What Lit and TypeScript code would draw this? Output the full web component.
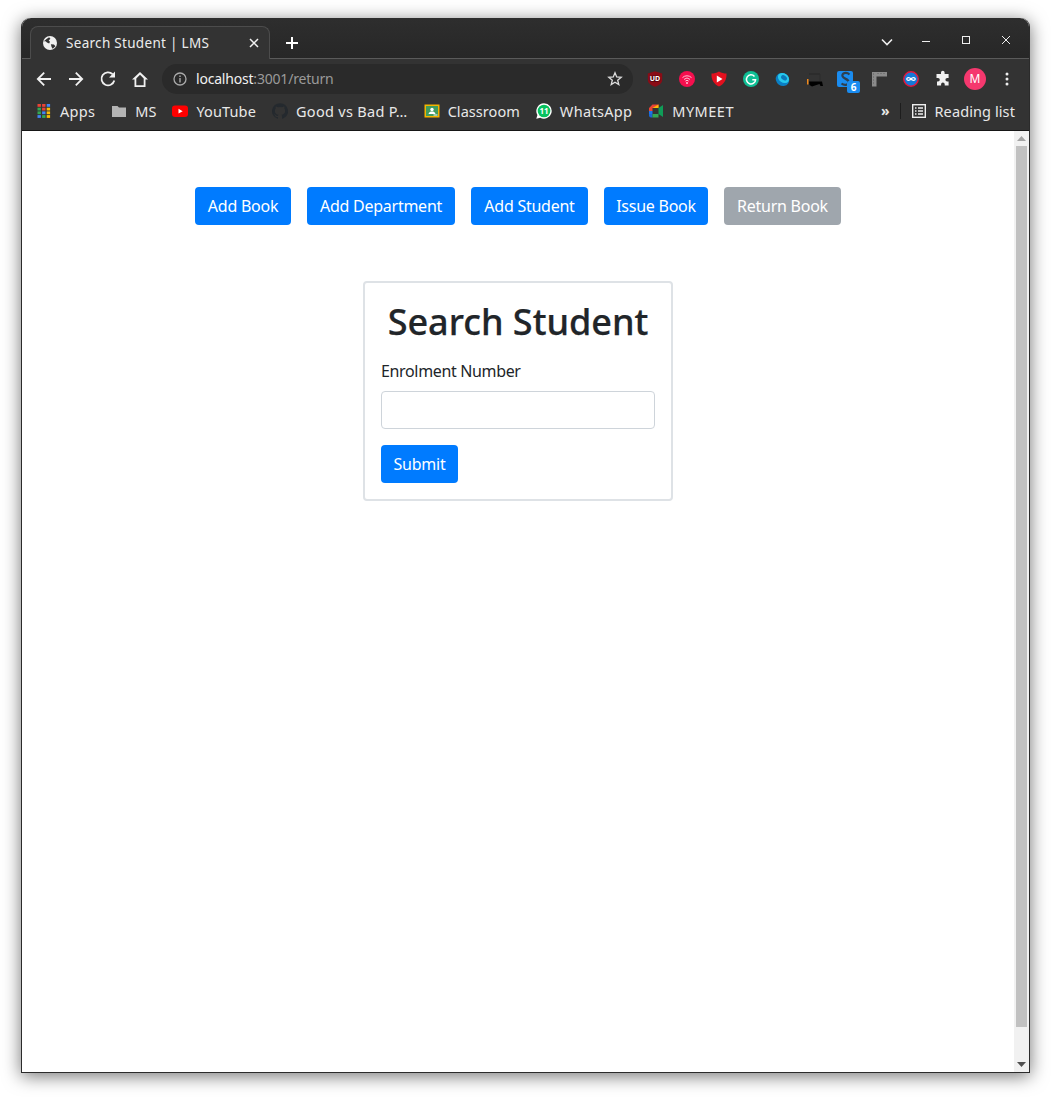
import { LitElement, html, css, svg } from "lit";
import { customElement } from "lit/decorators.js";

const nav = [
  svg`<path d="M17 10H4.500M10.200 3.600 3.800 10 10.200 16.400" fill="none" stroke="#f1f1f1" stroke-width="1.800"/>`,
  svg`<path d="M3 10H15.500M9.800 3.600 16.200 10 9.800 16.400" fill="none" stroke="#f1f1f1" stroke-width="1.800"/>`,
  svg`<path d="M16.300 11.500A6.500 6.500 0 1 1 14.600 5.200" fill="none" stroke="#f1f1f1" stroke-width="1.800"/><path d="M17 2.500V8.500H11Z" fill="#f1f1f1"/>`,
  svg`<path fill-rule="evenodd" d="M10 3 2 10.500H4.500V18H15.500V10.500H18ZM6.300 16.300V9.400L10 5.700 13.700 9.400V16.300Z" fill="#f1f1f1"/>`,
];

const ext = [
  svg`<path d="M.8 2.500 8 .2l7.200 2.300V9c0 3-3 5.400-7.200 6.800C3.800 14.400.8 12 .8 9Z" fill="#8a0c16"/><rect x="2.500" y="4.500" width="11" height="6.500" rx="3.200" fill="#5a0510"/><text x="8" y="10.200" text-anchor="middle" class="tiny">UD</text>`,
  svg`<circle cx="8" cy="8" r="8" fill="#f50f4e"/><path d="M3.500 6.600a6.500 6.500 0 0 1 9 0M5 8.400a4.300 4.300 0 0 1 6 0M6.400 10.100a2.200 2.200 0 0 1 3.200 0" fill="none" stroke="#ffc4d5" stroke-width="1"/><circle cx="8" cy="12" r="1" fill="#ffc4d5"/>`,
  svg`<path d="M.5 2.500C3 2.500 5.500 2 8 .5c2.500 1.500 5 2 7.500 2 .3 6-2 10.500-7.500 13C2.500 13 .2 8.500.5 2.500Z" fill="#e3101e"/><path d="M5.800 4.500 11.500 8l-5.700 3.500Z" fill="#fff"/>`,
  svg`<circle cx="8" cy="8" r="8" fill="#0fbf95"/><path d="M11.500 5.400A4.600 4.600 0 1 0 12.600 8.700H9.300" fill="none" stroke="#fff" stroke-width="1.500"/>`,
  svg`<ellipse cx="7.500" cy="8.500" rx="7" ry="6.300" transform="rotate(35 7.500 8.500)" fill="#0b7fc4"/><ellipse cx="8.500" cy="7" rx="6" ry="4.600" transform="rotate(35 8.500 7)" fill="#27c8ec"/><ellipse cx="9" cy="6.800" rx="3.200" ry="2.200" transform="rotate(35 9 6.800)" fill="#0b78b8"/>`,
  svg`<rect x="2" y="2" width="11" height="2" fill="#2c2c2c"/><path d="M13 3V10" stroke="#2c2c2c"/><path d="M2 10.500H15L16 15H13.500L12.500 13 5 15.500 2.500 14Z" fill="#000"/><path d="M0 8H1.500V13.500H0Z" fill="#f08a1d"/>`,
  svg`<rect x="-2" y="0" width="16" height="16" rx="2" fill="#1a8cf0"/><path d="M10.500 3.500C7.500 .8 2.500 2 3.500 5.200S9.500 7.500 9.500 11 5 14.500 2.500 12.500" fill="none" stroke="#2f3f4f" stroke-width="2.200"/>`,
  svg`<path d="M1 1H16V5.500H5.500V15.500H1Z" fill="#8b8b8b"/><path d="M2 3h1M2 6h1M2 9h1M2 12h1M7 2v1M10 2v1M13 2v1" stroke="#5f5f5f"/>`,
  svg`<circle cx="8" cy="8" r="7.200" fill="#1579d8" stroke="#e4173e" stroke-width="1.400"/><path d="M8 8C6.800 6.400 3.800 6.200 3.800 8S6.800 9.600 8 8C9.200 6.400 12.200 6.200 12.200 8S9.200 9.600 8 8Z" fill="none" stroke="#fff" stroke-width="1.300"/>`,
  svg`<path d="M6 1.500a1.800 1.800 0 0 1 3.600 0V3h4v4h-1.400a1.800 1.800 0 0 0 0 3.600h1.400v4H9.700v-1.300a1.800 1.800 0 0 0-3.600 0v1.300H2v-4.100h1a1.800 1.800 0 0 0 0-3.600H1.500V3H6Z" fill="#f1f1f1"/>`,
];

const appColors = [["#ea4335", "#ea4335", "#4285f4"], ["#34a853", "#ea4335", "#fbbc05"], ["#34a853", "#4285f4", "#fbbc05"], ["#4285f4", "#34a853", "#fbbc05"]];

const marks = [
  { icon: svg`<g>${appColors.flatMap((row, r) => row.map((c, i) => svg`<rect x="${1.5 + i * 4.6}" y="${1 + r * 3.7}" width="3.400" height="2.800" fill="${c}"/>`))}</g>`, text: "Apps", ls: 0.3 },
  { icon: svg`<path d="M1 3h5.500L8 4.600h7V14H1Z" fill="#b4b4b4"/>`, text: "MS", ls: 0 },
  { icon: svg`<rect x="0" y="2.500" width="16" height="11.500" rx="3" fill="#f00"/><path d="M6.500 5.800 10.700 8.200 6.500 10.600Z" fill="#fff"/>`, text: "YouTube", ls: 0.14 },
  { icon: svg`<path d="M8 .2a8 8 0 0 0-2.500 15.600c.4.100.5-.2.5-.4v-1.400c-2.200.5-2.700-1-2.700-1-.4-.9-.9-1.200-.9-1.200-.7-.5.100-.5.100-.5.800.100 1.200.8 1.200.8.700 1.200 1.900.9 2.300.7.100-.5.300-.9.500-1.100-1.800-.2-3.600-.9-3.600-4 0-.9.300-1.600.8-2.100-.1-.2-.4-1 .1-2.100 0 0 .7-.2 2.200.8a7.600 7.600 0 0 1 4 0c1.500-1 2.200-.8 2.200-.8.500 1.100.2 1.900.1 2.100.5.500.8 1.200.8 2.100 0 3.100-1.900 3.800-3.700 4 .3.300.6.800.6 1.500v2.200c0 .2.100.5.600.4A8 8 0 0 0 8 .2Z" fill="#24292e"/>`, text: "Good vs Bad P…", ls: 0.3 },
  { icon: svg`<rect x=".5" y="1.500" width="15" height="13" fill="#f4b400"/><rect x="2" y="3" width="12" height="10" fill="#3f9b5e"/><circle cx="8" cy="6.500" r="1.700" fill="#fff"/><path d="M4.500 11c.5-2 2-2.500 3.500-2.500s3 .5 3.500 2.500Z" fill="#fff"/><rect x="9.500" y="11.500" width="4" height="1" fill="#fff"/>`, text: "Classroom", ls: 0.05 },
  { icon: svg`<path d="M8 .3a7.700 7.700 0 0 0-6.600 11.600L.3 15.700l3.900-1A7.700 7.700 0 1 0 8 .3Z" fill="#fff"/><circle cx="8" cy="8" r="6.300" fill="#08c25f"/><text x="8" y="10.800" text-anchor="middle" class="num">11</text>`, text: "WhatsApp", ls: 0.32 },
  { icon: svg`<path d="M1 5 4.500 1.500H10.500V5H4.500V8H1Z" fill="#ea4335"/><path d="M1 8H4.500V11H1Z" fill="#1a73e8"/><path d="M1 11H4.500V14.500H3Q1 14.500 1 12.500Z" fill="#1967d2"/><path d="M4.500 11H10.500V14.500H4.500Z" fill="#34a853"/><path d="M10.500 1.500V5H4.500" fill="#fbbc04"/><path d="M10.500 5V11L15 14V2Z" fill="#0f9d58"/>`, text: "MYMEET", ls: 0.5 },
];

const buttons = [
  { text: "Add Book", w: 96, off: false },
  { text: "Add Department", w: 148, off: false },
  { text: "Add Student", w: 117, off: false },
  { text: "Issue Book", w: 104, off: false },
  { text: "Return Book", w: 117, off: true },
];

@customElement("app-root")
export class AppRoot extends LitElement {
  static styles = css`
    :host { display: block; height: 1097px; overflow: hidden; background: #fff; font-family: "Noto Sans", sans-serif; }
    * { box-sizing: border-box; }
    .stage { padding: 18px 21px 0; }
    .window { height: 1055px; border: 1px solid #2b2b2b; border-top: 0; border-radius: 9px 9px 0 0; box-shadow: 0 3px 18px rgba(0,0,0,.55); display: flex; flex-direction: column; background: #fff; }
    .titlebar { height: 41px; flex: none; display: flex; align-items: flex-end; padding-left: 8px; border-radius: 9px 9px 0 0; background: linear-gradient(#2e2e2e, #272727); border-bottom: 1px solid #5a5a5a; position: relative; }
    .tab { width: 240px; height: 33px; margin-bottom: -1px; position: relative; z-index: 1; background: #333; border: 1px solid #4c4c4c; border-bottom: 0; border-radius: 8px 8px 0 0; display: flex; align-items: center; padding: 0 10px 0 12px; color: #ececec; font-size: 13.5px; letter-spacing: .3px; }
    .tab .fav { margin-right: 9px; flex: none; }
    .tab span { flex: 1; white-space: nowrap; }
    .newtab { width: 28px; height: 28px; margin: 0 0 1px 8px; display: flex; align-items: center; justify-content: center; }
    .controls { margin-left: auto; height: 40px; display: flex; align-items: center; padding: 4px 3px 0 0; }
    .controls div { width: 40px; height: 40px; display: flex; align-items: center; justify-content: center; }
    .chev { margin: 4px 0 0 2px; }
    .toolbar { height: 39px; flex: none; background: #333; display: flex; align-items: center; padding-left: 6px; }
    .btn32 { width: 32px; height: 32px; flex: none; display: flex; align-items: center; justify-content: center; position: relative; }
    .omni { width: 471px; height: 30px; margin: 0 6px; flex: none; background: #2a2a2a; border-radius: 15px; display: flex; align-items: center; padding: 0 10px 0 11px; font-size: 14px; color: #f1f1f1; letter-spacing: -.2px; }
    .omni .url { margin-left: 9px; flex: 1; white-space: nowrap; }
    .omni .url span { color: #9a9a9a; }
    .badge { position: absolute; left: 16px; top: 18px; width: 13px; height: 12px; background: #1a8cf0; border-radius: 2px; color: #fff; font-size: 10px; font-weight: 700; line-height: 12px; text-align: center; }
    .avatar { width: 22px; height: 22px; border-radius: 50%; background: #f5386e; color: #fff; font-size: 12px; display: flex; align-items: center; justify-content: center; }
    .bookmarks { height: 33px; flex: none; background: #333; border-bottom: 1px solid #161616; display: flex; align-items: center; padding: 0 0 7px 14px; font-size: 14.5px; color: #e8e8e8; }
    .mark { display: flex; align-items: center; gap: 8px; margin-right: 16px; white-space: nowrap; }
    .bk-right { margin-left: auto; display: flex; align-items: center; padding-right: 14px; }
    .more { font-size: 14px; font-weight: 700; margin-right: 10px; line-height: 1; }
    .sep { width: 1px; height: 16px; background: #1d1d1d; margin-right: 11px; }
    .reading { display: flex; align-items: center; gap: 9px; letter-spacing: .1px; }
    .tiny { font: 700 7px "Noto Sans", sans-serif; fill: #fff; }
    .num { font: 700 8px "Noto Sans", sans-serif; fill: #fff; }
    .viewport { flex: 1; display: flex; min-height: 0; }
    .page { flex: 1; padding-top: 56px; display: flex; flex-direction: column; align-items: center; }
    .nav { display: flex; gap: 16px; }
    .b { height: 38px; padding: 0; border: 0; border-radius: 4px; background: #007bff; color: #fff; font: 16px "Noto Sans", sans-serif; letter-spacing: -.25px; display: flex; align-items: center; justify-content: center; white-space: nowrap; }
    .b.off { background: #9fa6ad; }
    .card { width: 310px; height: 220px; margin-top: 56px; border: 2px solid #dee2e6; border-radius: 4px; padding: 16px; color: #212529; }
    h1 { margin: 0 0 14px; font-size: 36px; font-weight: 500; line-height: 46px; text-align: center; white-space: nowrap; -webkit-text-stroke: .25px #212529; }
    label { display: block; font-size: 16px; line-height: 24px; margin-bottom: 8px; letter-spacing: -.35px; }
    .input { display: block; width: 100%; height: 38px; border: 1px solid #ced4da; border-radius: 4px; background: #fff; margin-bottom: 16px; }
    .sub { width: 77px; }
    .scroll { width: 15px; flex: none; background: #f1f1f1; display: flex; flex-direction: column; align-items: center; }
    .arrow { height: 15px; flex: none; display: flex; align-items: center; justify-content: center; }
    .thumb { width: 11px; height: 881px; background: #c1c1c1; flex: none; }
    .fill { flex: 1; }
  `;

  render() {
    return html`<div class="stage"><div class="window">
      <div class="titlebar">
        <div class="tab">
          <svg class="fav" width="14" height="14" viewBox="0 0 16 16"><circle cx="8" cy="8" r="8" fill="#f1f1f1"/><path d="M1 6 4 3.500 7 1.500 8.500 3 6.500 5 8 6.500 7 8.500 4.500 7.500 3 6ZM9 9.500 12.500 9.800 14.200 11.800 11 14.500 9.800 12.500Z" fill="#333"/></svg>
          <span>Search Student | LMS</span>
          <svg width="10" height="10" viewBox="0 0 10 10"><path d="M1 1 9 9M9 1 1 9" stroke="#f1f1f1" stroke-width="1.500"/></svg>
        </div>
        <div class="newtab"><svg width="14" height="14" viewBox="0 0 14 14"><path d="M7 1V13M1 7H13" stroke="#fff" stroke-width="2"/></svg></div>
        <div class="controls">
          <div><svg class="chev" width="12" height="8" viewBox="0 0 12 8"><path d="M1 1.500 6 6.500 11 1.500" fill="none" stroke="#eee" stroke-width="1.600"/></svg></div>
          <div><svg width="10" height="10" viewBox="0 0 10 10"><path d="M1 6.500H9" stroke="#eee" stroke-width="1"/></svg></div>
          <div><svg width="10" height="10" viewBox="0 0 10 10"><rect x="1.500" y="1.500" width="7" height="7" fill="none" stroke="#eee"/></svg></div>
          <div><svg width="10" height="10" viewBox="0 0 10 10"><path d="M1 1 9 9M9 1 1 9" stroke="#eee" stroke-width="1"/></svg></div>
        </div>
      </div>
      <div class="toolbar">
        ${nav.map((p) => html`<div class="btn32"><svg width="20" height="20" viewBox="0 0 20 20">${p}</svg></div>`)}
        <div class="omni">
          <svg width="14" height="14" viewBox="0 0 14 14"><circle cx="7" cy="7" r="6" fill="none" stroke="#aaa" stroke-width="1.300"/><path d="M7 6V10.500M7 3.500V5" stroke="#aaa" stroke-width="1.400"/></svg>
          <div class="url">localhost<span>:3001/return</span></div>
          <svg width="16" height="16" viewBox="0 0 16 16"><path d="M8 1.800 9.700 6 14.200 6.300 10.700 9.200 11.800 13.600 8 11.200 4.200 13.600 5.300 9.200 1.800 6.300 6.300 6Z" fill="none" stroke="#ddd" stroke-width="1.300"/></svg>
        </div>
        ${ext.map((p, i) => html`<div class="btn32"><svg width="16" height="16" viewBox="0 0 16 16" style="overflow:visible">${p}</svg>${i === 6 ? html`<span class="badge">6</span>` : ""}</div>`)}
        <div class="btn32"><div class="avatar">M</div></div>
        <div class="btn32"><svg width="4" height="14" viewBox="0 0 4 14"><circle cx="2" cy="2" r="1.500" fill="#eee"/><circle cx="2" cy="7" r="1.500" fill="#eee"/><circle cx="2" cy="12" r="1.500" fill="#eee"/></svg></div>
      </div>
      <div class="bookmarks">
        ${marks.map((m) => html`<div class="mark"><svg width="16" height="16" viewBox="0 0 16 16">${m.icon}</svg><span style="letter-spacing:${m.ls}px">${m.text}</span></div>`)}
        <div class="bk-right">
          <span class="more">»</span><span class="sep"></span>
          <div class="reading"><svg width="14" height="14" viewBox="0 0 14 14"><rect x=".7" y=".7" width="12.600" height="12.600" fill="none" stroke="#eee" stroke-width="1.400"/><path d="M3 4H4.500M6 4H11M3 7H4.500M6 7H11M3 10H4.500M6 10H11" stroke="#eee" stroke-width="1.300"/></svg><span>Reading list</span></div>
        </div>
      </div>
      <div class="viewport">
        <div class="page">
          <div class="nav">
            ${buttons.map((b) => html`<button class="b ${b.off ? "off" : ""}" style="width:${b.w}px">${b.text}</button>`)}
          </div>
          <div class="card">
            <h1>Search Student</h1>
            <label>Enrolment Number</label>
            <div class="input"></div>
            <button class="b sub">Submit</button>
          </div>
        </div>
        <div class="scroll">
          <div class="arrow"><svg width="9" height="5" viewBox="0 0 9 5"><path d="M4.500 0 9 5H0Z" fill="#a3a3a3"/></svg></div>
          <div class="thumb"></div>
          <div class="fill"></div>
          <div class="arrow"><svg width="9" height="5" viewBox="0 0 9 5"><path d="M4.500 5 9 0H0Z" fill="#505050"/></svg></div>
        </div>
      </div>
    </div></div>`;
  }
}
